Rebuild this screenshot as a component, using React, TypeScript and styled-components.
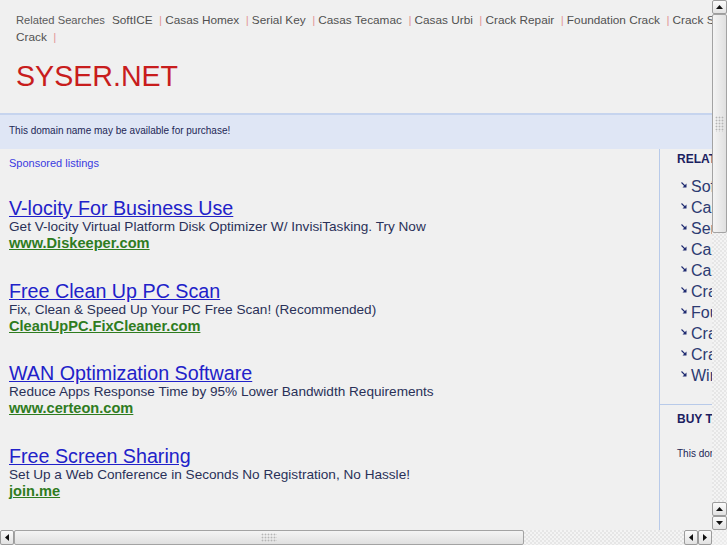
import React from "react";
import styled, { createGlobalStyle } from "styled-components";

const relatedLinks = [
  "SoftICE",
  "Casas Homex",
  "Serial Key",
  "Casas Tecamac",
  "Casas Urbi",
  "Crack Repair",
  "Foundation Crack",
  "Crack Serial",
  "Crack",
];

const sideLinks = [...relatedLinks, "Windows XP"];

const ads = [
  {
    title: "V-locity For Business Use",
    desc: "Get V-locity Virtual Platform Disk Optimizer W/ InvisiTasking. Try Now",
    url: "www.Diskeeper.com",
  },
  {
    title: "Free Clean Up PC Scan",
    desc: "Fix, Clean & Speed Up Your PC Free Scan! (Recommended)",
    url: "CleanUpPC.FixCleaner.com",
  },
  {
    title: "WAN Optimization Software",
    desc: "Reduce Apps Response Time by 95% Lower Bandwidth Requirements",
    url: "www.certeon.com",
  },
  {
    title: "Free Screen Sharing",
    desc: "Set Up a Web Conference in Seconds No Registration, No Hassle!",
    url: "join.me",
  },
];

const GlobalStyle = createGlobalStyle`
  html, body {
    margin: 0;
    padding: 0;
    background: #f0f0f0;
    font-family: "Liberation Sans", Arial, sans-serif;
  }
`;

const Frame = styled.div`
  display: grid;
  grid-template-columns: 712px 15px;
  grid-template-rows: 530px 15px;
  width: 727px;
  height: 545px;
  overflow: hidden;
  background: #f0f0f0;
`;

const Viewport = styled.div`
  overflow: hidden;
  min-width: 0;
  min-height: 0;
`;

const Page = styled.div`
  width: 950px;
`;

const Header = styled.div`
  padding: 12px 16px 0;
`;

const Related = styled.div`
  width: 745px;
  font-size: 11.8px;
  line-height: 17px;
  color: #505050;
`;

const RelatedLabel = styled.span`
  font-size: 11.2px;
  color: #5a5a5a;
  margin-right: 7px;
`;

const RelatedLink = styled.a`
  color: #505050;
  text-decoration: none;
`;

const Pipe = styled.span`
  color: #e39b9b;
  margin: 0 3px 0 6.5px;
`;

const SiteTitle = styled.h1`
  margin: 14px 0 0;
  font-size: 28.6px;
  font-weight: normal;
  line-height: 33px;
  color: #c81d1d;
`;

const Banner = styled.div`
  margin-top: 20px;
  border-top: 2px solid #c6d4ee;
  background: #dfe6f5;
  padding: 9px 9px 12px;
  font-size: 10px;
  line-height: 13px;
  color: #1d2656;
`;

const Body = styled.div`
  display: flex;
`;

const Main = styled.div`
  width: 650px;
  padding: 7px 0 0 9px;
`;

const Sponsored = styled.div`
  font-size: 11px;
  line-height: 14px;
  color: #3a3ae0;
`;

const AdList = styled.div`
  margin-top: 28px;
  display: flex;
  flex-direction: column;
  gap: 28.7px;
`;

const Ad = styled.div``;

const AdTitle = styled.a`
  display: block;
  font-size: 19.7px;
  line-height: 20px;
  color: #2121c9;
  text-decoration: underline;
`;

const AdDesc = styled.div`
  font-size: 13.6px;
  line-height: 17px;
  color: #2a3058;
`;

const AdUrl = styled.a`
  display: block;
  font-size: 14.6px;
  line-height: 17px;
  font-weight: bold;
  color: #2f7c1f;
  text-decoration: underline;
`;

const Sidebar = styled.div`
  flex: 1;
  min-height: 1100px;
  border-left: 1px solid #b8cae9;
`;

const SideSection = styled.div<{ $divider?: boolean }>`
  padding: ${(p) => (p.$divider ? "7px" : "3px")} 0 17.5px 17px;
  border-top: ${(p) => (p.$divider ? "1px solid #b8cae9" : "none")};
`;

const SideHeading = styled.div`
  font-size: 12px;
  font-weight: bold;
  line-height: 14px;
  color: #1b2060;
`;

const SideList = styled.ul`
  list-style: none;
  margin: 10.5px 0 0 4px;
  padding: 0;
`;

const SideItem = styled.li`
  display: flex;
  align-items: center;
  gap: 4px;
  height: 21px;
  font-size: 16px;
  color: #2c3a72;
  white-space: nowrap;
`;

const ArrowBox = styled.span`
  display: flex;
  margin-top: -4px;
`;

const SideText = styled.div`
  margin-top: 20.5px;
  font-size: 10px;
  line-height: 13px;
  color: #1d2656;
  white-space: nowrap;
`;

const VBar = styled.div`
  display: flex;
  flex-direction: column;
  background-color: #f3f3f3;
  background-image: repeating-conic-gradient(#e6e6e6 0 25%, #f4f4f4 0 50%);
  background-size: 4px 4px;
`;

const HBar = styled.div`
  display: flex;
  background-color: #f3f3f3;
  background-image: repeating-conic-gradient(#e6e6e6 0 25%, #f4f4f4 0 50%);
  background-size: 4px 4px;
`;

const Corner = styled.div`
  background-color: #f3f3f3;
  background-image: repeating-conic-gradient(#ebebeb 0 25%, #f5f5f5 0 50%);
  background-size: 4px 4px;
`;

const Step = styled.div<{ $horizontal?: boolean }>`
  flex: none;
  box-sizing: border-box;
  width: ${(p) => (p.$horizontal ? "14px" : "15px")};
  height: ${(p) => (p.$horizontal ? "15px" : "14px")};
  border: 1px solid #9c9c9c;
  border-radius: 2px;
  background: linear-gradient(#fbfbfb, #e2e2e2);
  display: flex;
  align-items: center;
  justify-content: center;
`;

const Thumb = styled.div<{ $horizontal?: boolean }>`
  flex: none;
  box-sizing: border-box;
  width: ${(p) => (p.$horizontal ? "510px" : "15px")};
  height: ${(p) => (p.$horizontal ? "15px" : "219px")};
  border: 1px solid #a3a3a3;
  border-radius: 2px;
  background: ${(p) =>
    p.$horizontal
      ? "linear-gradient(#f4f4f4, #e0e0e0)"
      : "linear-gradient(90deg, #f4f4f4, #e0e0e0)"};
  display: flex;
  align-items: center;
  justify-content: center;
`;

const Grip = styled.div<{ $horizontal?: boolean }>`
  width: ${(p) => (p.$horizontal ? "16px" : "9px")};
  height: ${(p) => (p.$horizontal ? "9px" : "16px")};
  background-image: radial-gradient(circle, #b5b5b5 0.8px, transparent 1.1px);
  background-size: 3px 3px;
`;

const Track = styled.div`
  flex: 1;
`;

type Dir = "up" | "down" | "left" | "right";

const triangle: Record<Dir, string> = {
  up: "0,5 7,5 3.5,1",
  down: "0,1 7,1 3.5,5",
  left: "5,0 5,7 1,3.5",
  right: "1,0 1,7 5,3.5",
};

const StepArrow = ({ dir }: { dir: Dir }) => {
  const vertical = dir === "up" || dir === "down";
  return (
    <svg
      width={vertical ? 7 : 6}
      height={vertical ? 6 : 7}
      viewBox={vertical ? "0 0 7 6" : "0 0 6 7"}
    >
      <polygon points={triangle[dir]} fill="#111" />
    </svg>
  );
};

const LinkArrow = () => (
  <ArrowBox>
    <svg width="6" height="6" viewBox="0 0 6 6">
      <line x1="0.5" y1="0.5" x2="4" y2="4" stroke="#1e2a70" strokeWidth="1.1" />
      <polygon points="1.5,5.5 5.5,5.5 5.5,1.5" fill="#1e2a70" />
    </svg>
  </ArrowBox>
);

export default function App() {
  return (
    <>
      <GlobalStyle />
      <Frame>
        <Viewport>
          <Page>
            <Header>
              <Related>
                <RelatedLabel>Related Searches</RelatedLabel>
                {relatedLinks.map((link) => (
                  <React.Fragment key={link}>
                    <RelatedLink href="#">{link}</RelatedLink>
                    <Pipe>|</Pipe>
                    <wbr />
                  </React.Fragment>
                ))}
              </Related>
              <SiteTitle>SYSER.NET</SiteTitle>
            </Header>
            <Banner>This domain name may be available for purchase!</Banner>
            <Body>
              <Main>
                <Sponsored>Sponsored listings</Sponsored>
                <AdList>
                  {ads.map((ad) => (
                    <Ad key={ad.title}>
                      <AdTitle href="#">{ad.title}</AdTitle>
                      <AdDesc>{ad.desc}</AdDesc>
                      <AdUrl href="#">{ad.url}</AdUrl>
                    </Ad>
                  ))}
                </AdList>
              </Main>
              <Sidebar>
                <SideSection>
                  <SideHeading>RELATED SEARCHES</SideHeading>
                  <SideList>
                    {sideLinks.map((link, i) => (
                      <SideItem key={i}>
                        <LinkArrow />
                        {link}
                      </SideItem>
                    ))}
                  </SideList>
                </SideSection>
                <SideSection $divider>
                  <SideHeading>BUY THIS DOMAIN</SideHeading>
                  <SideText>This domain name may be available for purchase.</SideText>
                </SideSection>
              </Sidebar>
            </Body>
          </Page>
        </Viewport>
        <VBar>
          <Step>
            <StepArrow dir="up" />
          </Step>
          <Thumb>
            <Grip />
          </Thumb>
          <Track />
          <Step>
            <StepArrow dir="up" />
          </Step>
          <Step>
            <StepArrow dir="down" />
          </Step>
        </VBar>
        <HBar>
          <Step $horizontal>
            <StepArrow dir="left" />
          </Step>
          <Thumb $horizontal>
            <Grip $horizontal />
          </Thumb>
          <Track />
          <Step $horizontal>
            <StepArrow dir="left" />
          </Step>
          <Step $horizontal>
            <StepArrow dir="right" />
          </Step>
        </HBar>
        <Corner />
      </Frame>
    </>
  );
}
